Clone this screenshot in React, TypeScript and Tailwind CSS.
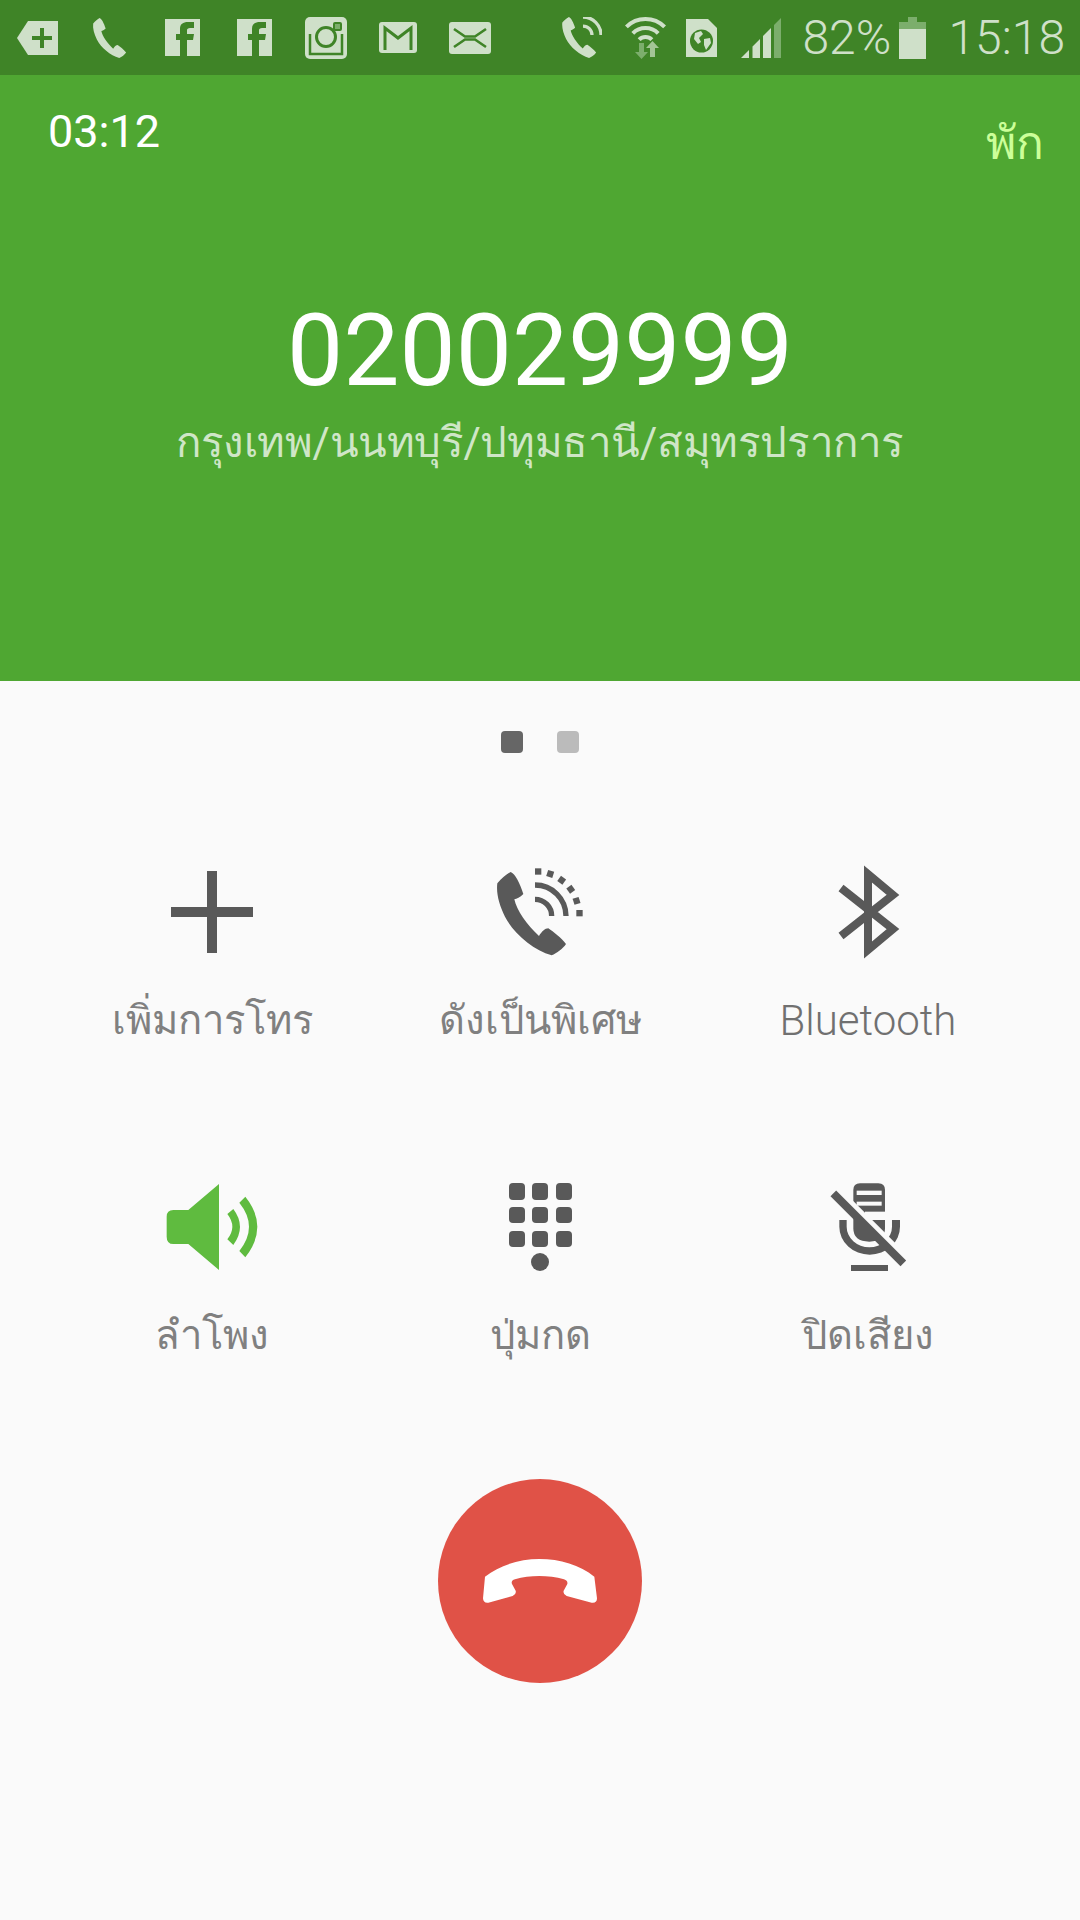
const LIGHT = "#cfe0c9";
const DIM = "#7cae6c";
const BAR = "#3f8427";
const GRAY = "#595959";

const HANDSET =
  "M122 66 C135 70 150 100 160 132 C150 142 140 146 133 148 C140 180 170 225 207 258 C215 245 225 235 235 235 C250 245 275 265 288 282 C280 295 260 310 245 316 C190 300 130 250 105 200 C88 165 78 130 82 100 C95 85 110 72 122 66 Z";

function FacebookIcon() {
  return (
    <svg width="35" height="37" viewBox="0 0 35 37">
      <rect width="35" height="37" fill={LIGHT} />
      <path d="M15 37 V21 H11 V15 H15 V10 C15 5 18 3 23 3 H29 V9 H25 C23 9 22 10 22 11 V15 H29 L28 21 H22 V37 Z" fill={BAR} />
    </svg>
  );
}

function StatusLeft() {
  return (
    <div className="flex items-center">
      <svg className="ml-[17px]" width="41" height="34" viewBox="0 0 41 34">
        <path d="M0 17 L11 0 H41 V34 H11 Z" fill={LIGHT} />
        <path d="M21 15 H29 V7 H33 V15 H41 V19 H33 V27 H29 V19 H21 Z" transform="translate(-6 0)" fill={BAR} />
      </svg>
      <svg className="ml-[34px]" width="35" height="40" viewBox="80 66 208 250">
        <path d={HANDSET} fill={LIGHT} />
      </svg>
      <div className="ml-[38px]"><FacebookIcon /></div>
      <div className="ml-[37px]"><FacebookIcon /></div>
      <svg className="ml-[33px]" width="42" height="42" viewBox="0 0 42 42">
        <rect width="42" height="42" rx="5" fill={LIGHT} />
        <path d="M5 17 V37 H37 V17" fill="none" stroke={BAR} strokeWidth="2.5" />
        <circle cx="21" cy="20" r="9.5" fill={LIGHT} stroke={BAR} strokeWidth="3" />
        <rect x="28" y="5" width="9" height="9" rx="2" fill={BAR} />
        <rect x="30" y="7" width="5" height="5" fill={DIM} />
      </svg>
      <svg className="ml-[32px]" width="38" height="31" viewBox="0 0 38 31">
        <rect width="38" height="31" rx="3" fill={LIGHT} />
        <path d="M6 28 V6 L19 16 L32 6 V28" fill="none" stroke={BAR} strokeWidth="3" />
      </svg>
      <svg className="ml-[32px]" width="42" height="32" viewBox="0 0 42 32">
        <rect width="42" height="32" rx="3" fill={LIGHT} />
        <path d="M5 7 L16 14.5 H26 L37 7 M5 25 L16 17.5 H26 L37 25" fill="none" stroke={BAR} strokeWidth="2.6" />
      </svg>
    </div>
  );
}

function StatusRight() {
  return (
    <div className="flex items-center font-light text-[48px] leading-none text-[#cfe0c9]">
      <svg width="40" height="41" viewBox="80 66 244 250">
        <path d={HANDSET} fill={LIGHT} />
        <path d="M208 66 A110 110 0 0 1 318 176" fill="none" stroke={LIGHT} strokeWidth="20" />
        <path d="M208 121 A55 55 0 0 1 263 176" fill="none" stroke={LIGHT} strokeWidth="20" />
      </svg>
      <svg className="ml-[23px]" width="41" height="43" viewBox="0 0 41 43">
        <g fill="none" stroke={LIGHT} strokeWidth="4">
          <path d="M1.4 10.9 A27 27 0 0 1 39.6 10.9" />
          <path d="M7.8 17.3 A18 18 0 0 1 33.2 17.3" />
          <path d="M14.1 23.6 A9 9 0 0 1 26.9 23.6" />
        </g>
        <path d="M14 27 H19 V36 H23 L16.5 43 L10 36 H14 Z" fill={DIM} />
        <path d="M25 41 H30 V32 H34 L27.5 25 L21 32 H25 Z" fill="#a3c596" />
      </svg>
      <svg className="ml-[20px]" width="31" height="38" viewBox="0 0 31 38">
        <path d="M0 0 H22 L31 9 V38 H0 Z" fill={LIGHT} />
        <circle cx="15.5" cy="22" r="11.5" fill={BAR} />
        <path d="M9 14 L15 12 L17 15 L13 19 L15 23 L12 25 L8 20 Z M18 20 L24 19 L25 24 L20 31 L18 26 Z" fill={LIGHT} />
      </svg>
      <svg className="ml-[24px]" width="40" height="40" viewBox="0 0 40 40">
        <path d="M0 40 L8 32 V40 Z M11.5 28.5 L19 21 V40 H11.5 Z M22 18 L30 10 V40 H22 Z" fill={LIGHT} />
        <path d="M33 7 L40 0 V40 H33 Z" fill={DIM} />
      </svg>
      <span className="ml-[21px] w-[87px] whitespace-nowrap">82%</span>
      <svg className="ml-[10px]" width="27" height="42" viewBox="0 0 27 42">
        <path d="M9 0 H18 V5 H27 V12 H0 V5 H9 Z" fill={DIM} />
        <rect y="12" width="27" height="30" fill={LIGHT} />
      </svg>
      <span className="ml-[22px] mr-[15px] whitespace-nowrap">15:18</span>
    </div>
  );
}

function CallIcon({ box, children }: { box: string; children: React.ReactNode }) {
  return (
    <svg width="130" height="120" viewBox={box} fill={GRAY}>
      {children}
    </svg>
  );
}

function Action({ label, box, latin, children }: { label: string; box: string; latin?: boolean; children: React.ReactNode }) {
  return (
    <div className="flex flex-col items-center">
      <CallIcon box={box}>{children}</CallIcon>
      <div className={latin ? "mt-[23px] h-[56px] whitespace-nowrap text-[42px] font-light leading-[56px] text-[#707070]" : "mt-[23px] h-[56px] whitespace-nowrap text-[40px] leading-[56px] text-[#808080]"}>
        {label}
      </div>
    </div>
  );
}

export default function App() {
  return (
    <div className="flex h-[1920px] w-[1080px] flex-col overflow-hidden bg-[#fafafa] font-['Roboto','Noto_Sans',sans-serif]">
      <div className="flex h-[75px] items-center justify-between bg-[#3f8427]">
        <StatusLeft />
        <StatusRight />
      </div>

      <div className="flex h-[606px] flex-col bg-[#4fa732]">
        <div className="flex items-start justify-between pl-12 pr-9 pt-[30px]">
          <div className="text-[45px] leading-[54px] text-white">03:12</div>
          <div className="mt-[11px] text-[46px] leading-[54px] text-[#ccff99]">พัก</div>
        </div>
        <div className="mt-[122px] text-center text-[100px] leading-[117px] text-white">020029999</div>
        <div className="mt-[6px] text-center text-[42px] leading-[56px] tracking-[-0.4px] text-[#cfe6c7]">กรุงเทพ/นนทบุรี/ปทุมธานี/สมุทรปราการ</div>
      </div>

      <div className="mt-[50px] flex justify-center gap-[34px]">
        <div className="h-[22px] w-[22px] rounded-[4px] bg-[#666666]" />
        <div className="h-[22px] w-[22px] rounded-[4px] bg-[#bbbbbb]" />
      </div>

      <div className="mt-[97px] grid grid-cols-3 gap-y-[116px] px-12">
        <Action label="เพิ่มการโทร" box="147 850 130 120">
          <rect x="171" y="907" width="82" height="10" />
          <rect x="207" y="871" width="10" height="82" />
        </Action>

        <Action label="ดังเป็นพิเศษ" box="475 850 130 120">
          <g transform="translate(470 850) scale(0.3333)">
            <path d={HANDSET} />
            <path d="M195 148 A50 50 0 0 1 245 198" fill="none" stroke={GRAY} strokeWidth="16" />
            <path d="M195 105 A93 93 0 0 1 288 198" fill="none" stroke={GRAY} strokeWidth="16" />
            <rect x="195" y="55" width="19" height="19" />
            <rect x="231" y="62" width="19" height="19" transform="rotate(18 240 72)" />
            <rect x="266" y="81" width="19" height="19" transform="rotate(36 275 90)" />
            <rect x="293" y="109" width="19" height="19" transform="rotate(54 303 118)" />
            <rect x="311" y="143" width="19" height="19" transform="rotate(72 320 152)" />
            <rect x="319" y="180" width="19" height="19" />
          </g>
        </Action>

        <Action label="Bluetooth" latin box="803 850 130 120">
          <path d="M841 888 L893 929 L868 950 V874 L893 895 L841 936" fill="none" stroke={GRAY} strokeWidth="8" />
        </Action>

        <Action label="ลำโพง" box="147 1165 130 120">
          <g transform="translate(150 1170) scale(0.3333)" fill="#5fbb3f">
            <path d="M50 140 Q50 120 70 120 H115 L207 42 V300 L115 222 H70 Q50 222 50 200 Z" />
            <path d="M232 132 L250 117 Q290 170 250 225 L232 208 Q262 170 232 132 Z" />
            <path d="M268 98 L286 80 Q358 170 286 262 L268 243 Q326 170 268 98 Z" />
          </g>
        </Action>

        <Action label="ปุ่มกด" box="475 1165 130 120">
          <rect x="509" y="1183" width="16" height="17" rx="4" />
          <rect x="532" y="1183" width="16" height="17" rx="4" />
          <rect x="556" y="1183" width="16" height="17" rx="4" />
          <rect x="509" y="1207" width="16" height="16" rx="4" />
          <rect x="532" y="1207" width="16" height="16" rx="4" />
          <rect x="556" y="1207" width="16" height="16" rx="4" />
          <rect x="509" y="1231" width="16" height="16" rx="4" />
          <rect x="532" y="1231" width="16" height="16" rx="4" />
          <rect x="556" y="1231" width="16" height="16" rx="4" />
          <ellipse cx="540" cy="1262" rx="9" ry="9" />
        </Action>

        <Action label="ปิดเสียง" box="803 1165 130 120">
          <g transform="translate(810 1170) scale(0.3333)">
            <path d="M130 60 Q130 40 150 40 H205 Q225 40 225 60 V175 Q225 215 178 215 Q130 215 130 175 Z" />
            <rect x="140" y="62" width="75" height="13" fill="#fafafa" />
            <rect x="140" y="95" width="75" height="12" fill="#fafafa" />
            <rect x="165" y="125" width="70" height="25" fill="#fafafa" />
            <path d="M88 150 H110 V170 A68 62 0 0 0 246 170 V150 H270 V170 A91 84 0 0 1 88 170 Z" />
            <rect x="123" y="285" width="111" height="18" />
            <path d="M80 60 L290 270" stroke="#fafafa" strokeWidth="24" fill="none" />
            <path d="M70 70 L280 280" stroke={GRAY} strokeWidth="24" fill="none" />
          </g>
        </Action>
      </div>

      <div className="mt-[115px] flex justify-center">
        <div className="flex h-[204px] w-[204px] items-center justify-center rounded-full bg-[#e05247]">
          <svg width="204" height="204" viewBox="54 57 612 612">
            <path
              d="M195 350 C240 315 300 297 358 297 C420 297 480 315 523 350 L531 415 Q531 430 515 428 L440 408 Q428 402 431 392 L442 372 Q444 362 432 358 C385 345 330 345 285 358 Q272 362 276 372 L287 392 Q290 402 278 408 L205 428 Q190 430 189 415 Z"
              fill="#ffffff"
            />
          </svg>
        </div>
      </div>
    </div>
  );
}
